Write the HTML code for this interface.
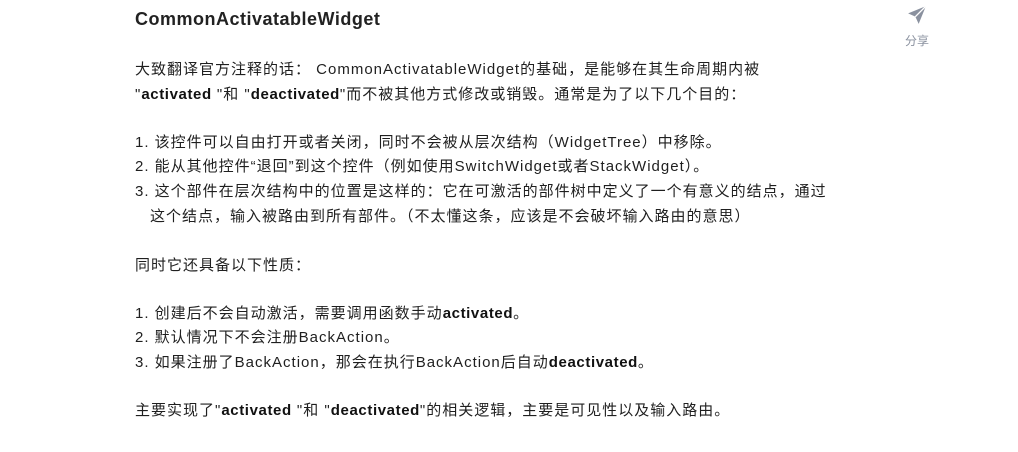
<!DOCTYPE html>
<html><head><meta charset="utf-8"><style>
body{margin:0;width:1018px;height:452px;background:#fff;overflow:hidden;font-family:"Liberation Sans","Noto Sans CJK SC",sans-serif;color:#1f1f1f;}
.l{position:absolute;left:135px;font-size:15px;line-height:20px;white-space:nowrap;letter-spacing:1px}
.h{position:absolute;left:135px;top:9px;font-size:18px;font-weight:bold;color:#222;letter-spacing:0.5px}
b{font-weight:bold;color:#111;letter-spacing:0.6px}
.ind{left:150px}
.share{position:absolute;left:900px;top:5px;width:34px;text-align:center;color:#8a919f;font-size:12px}
</style></head><body>
<div class="h">CommonActivatableWidget</div>
<div class="share"><svg width="20" height="20" viewBox="0 0 18 18"><path d="M17 1 L1 7.5 L7.5 10.5 L10.5 17 Z" fill="#8a919f"/><path d="M17 1 L7.5 10.5" stroke="#fff" stroke-width="1.2"/></svg><div style="margin-top:4px">分享</div></div>
<div class="l" style="top:60px">大致翻译官方注释的话： CommonActivatableWidget的基础，是能够在其生命周期内被</div>
<div class="l" style="top:85px">"<b>activated</b> "和 "<b>deactivated</b>"而不被其他方式修改或销毁。通常是为了以下几个目的：</div>
<div class="l" style="top:133px">1. 该控件可以自由打开或者关闭，同时不会被从层次结构（WidgetTree）中移除。</div>
<div class="l" style="top:157px">2. 能从其他控件“退回”到这个控件（例如使用SwitchWidget或者StackWidget）。</div>
<div class="l" style="top:182px">3. 这个部件在层次结构中的位置是这样的：它在可激活的部件树中定义了一个有意义的结点，通过</div>
<div class="l ind" style="top:207px">这个结点，输入被路由到所有部件。（不太懂这条，应该是不会破坏输入路由的意思）</div>
<div class="l" style="top:256px">同时它还具备以下性质：</div>
<div class="l" style="top:304px">1. 创建后不会自动激活，需要调用函数手动<b>activated</b>。</div>
<div class="l" style="top:328px">2. 默认情况下不会注册BackAction。</div>
<div class="l" style="top:353px">3. 如果注册了BackAction，那会在执行BackAction后自动<b>deactivated</b>。</div>
<div class="l" style="top:401px">主要实现了"<b>activated</b> "和 "<b>deactivated</b>"的相关逻辑，主要是可见性以及输入路由。</div>
</body></html>
